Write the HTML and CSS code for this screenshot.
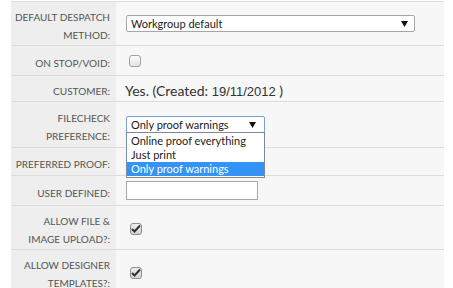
FILE: index.html
```html
<!DOCTYPE html>
<html lang="en">
<head>
    <meta charset="UTF-8">
    <title>Customer Settings</title>
    <link rel="stylesheet" href="styles.css">
</head>
<body>
    <div class="form-table">
        <div class="row row-double">
            <div class="label">Default despatch<br>method:</div>
            <div class="value">
                <div class="select select-wide">
                    <span>Workgroup default</span>
                    <svg class="arrow" width="7" height="6" viewBox="0 0 7 6"><path d="M0 0h7L3.5 6z" fill="#111"/></svg>
                </div>
            </div>
        </div>
        <div class="row row-single">
            <div class="label">On stop/void:</div>
            <div class="value"><span class="checkbox"></span></div>
        </div>
        <div class="row row-text">
            <div class="label">Customer:</div>
            <div class="value"><span class="customer">Yes. (Created: <span class="date">19/11/2012</span> )</span></div>
        </div>
        <div class="row row-double row-filecheck">
            <div class="label">Filecheck<br>preference:</div>
            <div class="value">
                <div class="dropdown">
                    <div class="select select-open">
                        <span>Only proof warnings</span>
                        <svg class="arrow" width="7" height="6" viewBox="0 0 7 6"><path d="M0 0h7L3.5 6z" fill="#111"/></svg>
                    </div>
                    <ul class="options">
                        <li>Online proof everything</li>
                        <li>Just print</li>
                        <li class="selected">Only proof warnings</li>
                    </ul>
                </div>
            </div>
        </div>
        <div class="row row-text row-proof">
            <div class="label">Preferred proof:</div>
            <div class="value"></div>
        </div>
        <div class="row row-single">
            <div class="label">User defined:</div>
            <div class="value"><input type="text" class="text-input"></div>
        </div>
        <div class="row row-double">
            <div class="label">Allow file &amp;<br>image upload?:</div>
            <div class="value"><span class="checkbox checked">
                <svg width="10" height="9" viewBox="0 0 10 9"><path d="M1 5l2.5 2.5L9 1.5" stroke="#333" stroke-width="2" fill="none"/></svg>
            </span></div>
        </div>
        <div class="row row-double">
            <div class="label">Allow designer<br>templates?:</div>
            <div class="value"><span class="checkbox checked">
                <svg width="10" height="9" viewBox="0 0 10 9"><path d="M1 5l2.5 2.5L9 1.5" stroke="#333" stroke-width="2" fill="none"/></svg>
            </span></div>
        </div>
    </div>
</body>
</html>
```

FILE: styles.css
```css
body {
    margin: 0;
    font-family: Lato, "Liberation Sans", sans-serif;
    background: #fff;
}
.form-table {
    margin: 1px 0 0 11px;
    width: 433px;
    border-top: 1px solid #dddddd;
}
.row {
    display: grid;
    grid-template-columns: 105px 1fr;
    border-bottom: 1px solid #dcdcdc;
    box-sizing: border-box;
}
.row-double {
    height: 44px;
}
.row-filecheck {
    height: 46px;
}
.row-single {
    height: 30px;
}
.row-text {
    height: 26px;
}
.row-proof {
    height: 28px;
}
.label {
    background: #eeeeee;
    color: #555;
    font-size: 10px;
    line-height: 18px;
    text-transform: uppercase;
    text-align: right;
    white-space: nowrap;
    padding: 4px 6px 0 0;
    display: flex;
    flex-direction: column;
    justify-content: center;
}
.value {
    background: #f7f7f7;
    padding-left: 10px;
    display: flex;
    align-items: center;
}
.select {
    box-sizing: border-box;
    height: 17px;
    border: 1px solid #a6a6a6;
    border-radius: 2px;
    background: #fff;
    font-size: 11px;
    color: #222;
    padding: 0 6px 0 4px;
    display: flex;
    align-items: center;
    justify-content: space-between;
}
.select-wide {
    width: 289px;
}
.dropdown {
    position: relative;
    width: 139px;
}
.select-open {
    border-color: #7c9fd6;
    padding-right: 8px;
}
.options {
    position: absolute;
    top: 16px;
    left: 0;
    right: 0;
    margin: 0;
    padding: 1px 0;
    list-style: none;
    background: #fff;
    border: 1px solid #7a8aa3;
    font-size: 11px;
    line-height: 14px;
    color: #222;
    white-space: nowrap;
    z-index: 2;
}
.options li {
    padding-left: 4px;
}
.options .selected {
    background: #3394f6;
    color: #fff;
}
.customer {
    font-size: 14px;
    color: #333;
    margin-left: -1px;
    padding-top: 3px;
}
.date {
    font-family: "Liberation Sans", Arial, sans-serif;
    font-size: 13px;
}
.checkbox {
    box-sizing: border-box;
    width: 12px;
    height: 12px;
    margin-left: 3px;
    border: 1px solid #a0a0a0;
    border-radius: 3px;
    background: linear-gradient(#fcfcfc, #e2e2e2);
    display: flex;
    align-items: center;
    justify-content: center;
}
.checkbox.checked {
    margin-left: 4px;
    margin-top: 2px;
    background: linear-gradient(#eeeeee, #d4d4d4);
    border-color: #8e8e8e;
}
.text-input {
    box-sizing: border-box;
    width: 132px;
    height: 19px;
    border: 1px solid #a6a6a6;
    background: #fff;
    padding: 0 4px;
    margin: 0;
}
```
